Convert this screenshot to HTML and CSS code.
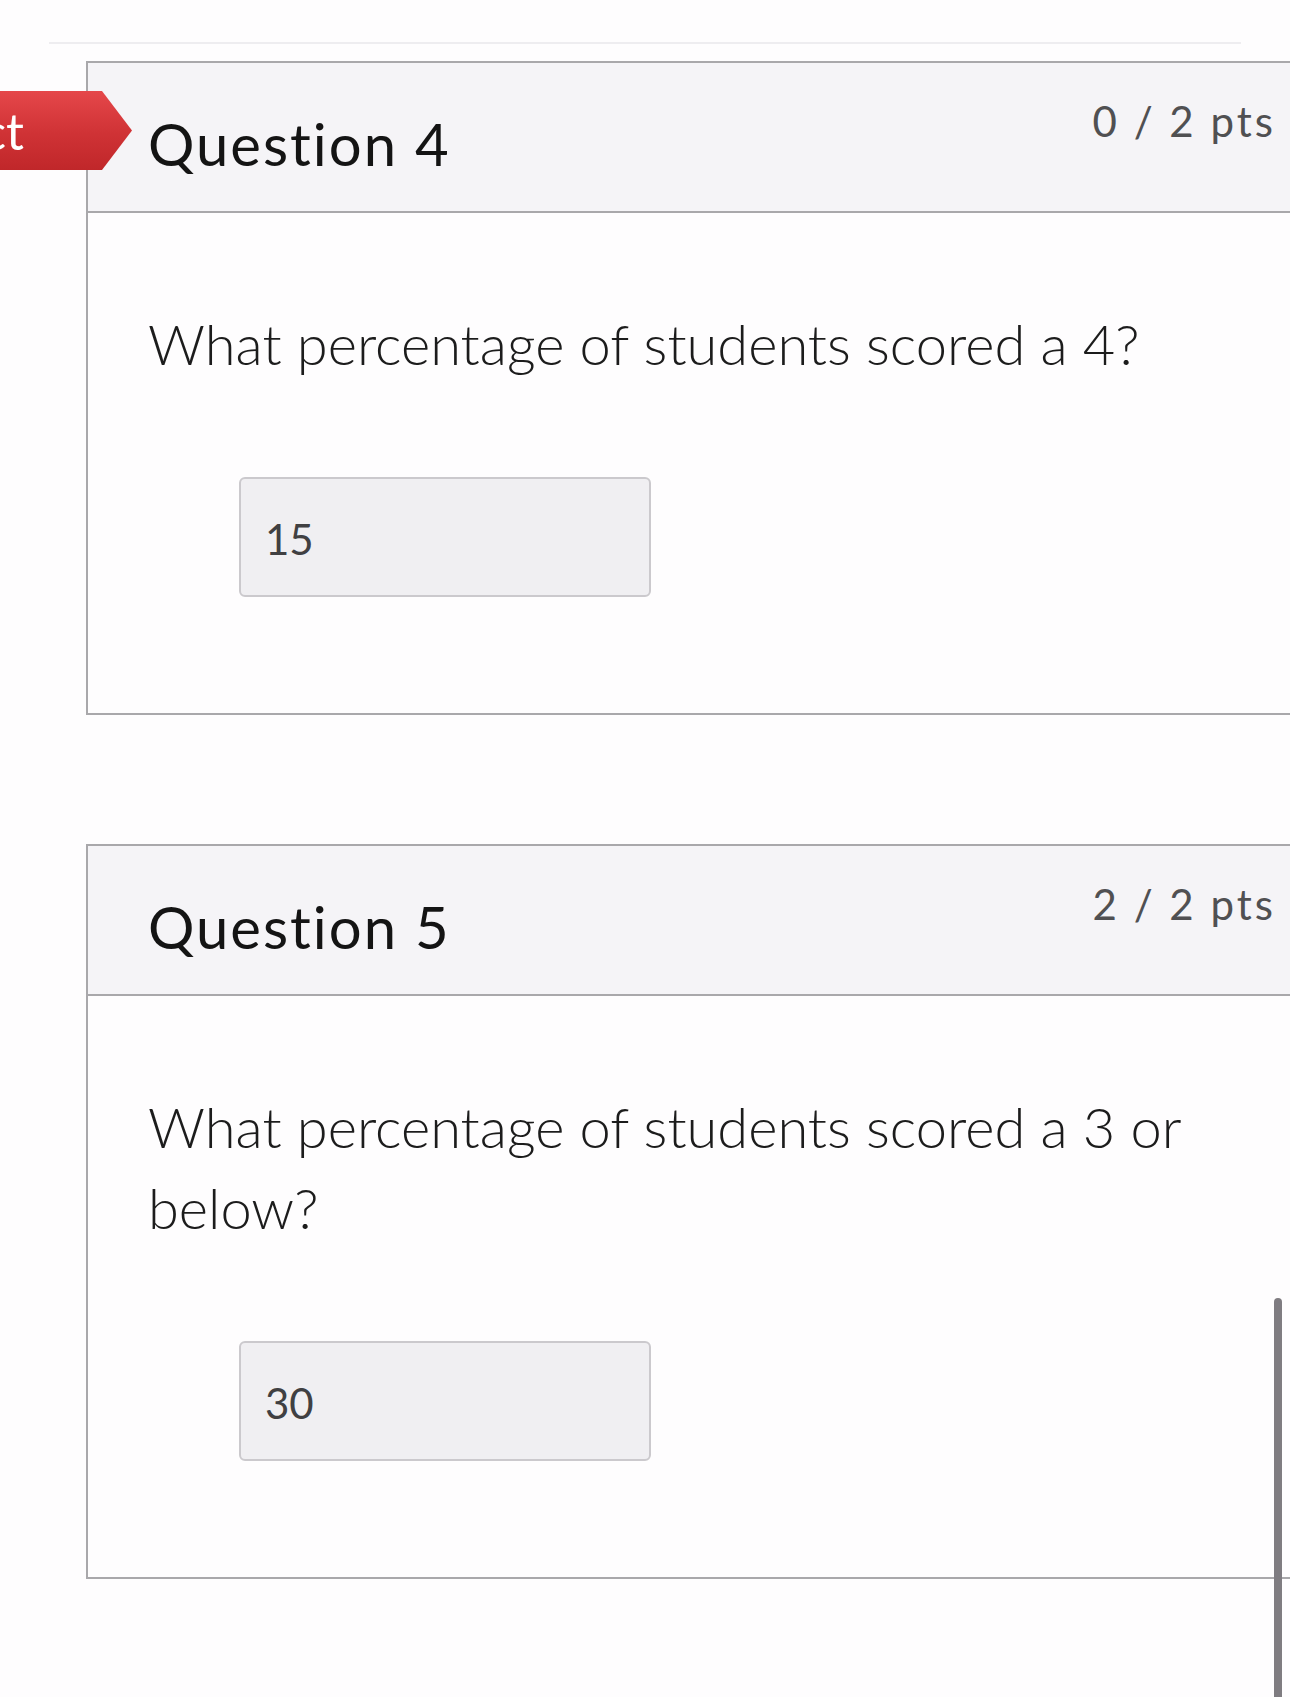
FILE: index.html
```html
<!DOCTYPE html>
<html lang="en">
<head>
<meta charset="utf-8">
<title>Quiz Results</title>
<link rel="stylesheet" href="styles.css">
</head>
<body>
<div class="page">
  <div class="divider"></div>

  <div class="card card-first">
    <div class="card-header">
      <h2 class="q-title">Question 4</h2>
      <span class="q-pts">0 / 2 pts</span>
    </div>
    <div class="card-body">
      <p class="q-text">What percentage of students scored a 4?</p>
      <div class="answer">15</div>
    </div>
  </div>

  <div class="card card-second">
    <div class="card-header">
      <h2 class="q-title">Question 5</h2>
      <span class="q-pts">2 / 2 pts</span>
    </div>
    <div class="card-body">
      <p class="q-text">What percentage of students scored a 3 or<br>below?</p>
      <div class="answer">30</div>
    </div>
  </div>
</div>

<div class="tag"><span class="tag-text">Incorrect</span></div>
<div class="scrollbar"></div>
</body>
</html>
```

FILE: styles.css
```css
html, body {
  margin: 0;
  padding: 0;
}
body {
  background: #fefdfe;
  font-family: Lato, "Open Sans", "Liberation Sans", sans-serif;
  color: #1f1f1f;
  overflow: hidden;
  position: relative;
  min-height: 1697px;
}
.page {
  padding-top: 42px;
}
.divider {
  margin-left: 49px;
  width: 1192px;
  height: 2px;
  background: #eeedf0;
}
.card {
  margin-left: 86px;
  width: 1220px;
  border: 2px solid #a9a8ab;
  background: #fefdfe;
}
.card-first {
  margin-top: 17px;
}
.card-second {
  margin-top: 129px;
}
.card-header {
  box-sizing: border-box;
  height: 150px;
  background: #f5f4f7;
  border-bottom: 2px solid #a9a8ab;
  display: flex;
  justify-content: space-between;
  align-items: flex-start;
  padding: 0 32px 0 60px;
}
.q-title {
  margin: 46px 0 0 0;
  font-size: 58px;
  line-height: 1.2;
  font-weight: 400;
  color: #141414;
  letter-spacing: 2px;
}
.q-pts {
  margin-top: 33px;
  font-size: 42px;
  line-height: 1.2;
  color: #505052;
  letter-spacing: 3px;
}
.card-body {
  padding: 90px 0 116px 60px;
}
.q-text {
  margin: 0;
  font-size: 56px;
  font-weight: 300;
  line-height: 81px;
  color: #1c1c1c;
}
.answer {
  box-sizing: border-box;
  margin: 93px 0 0 91px;
  width: 412px;
  height: 120px;
  background: #f0eff2;
  border: 2px solid #cbc9cd;
  border-radius: 6px;
  display: flex;
  align-items: center;
  padding: 4px 0 0 24px;
  font-size: 42px;
  line-height: 1.2;
  color: #404042;
}
.tag {
  position: absolute;
  left: -300px;
  top: 91px;
  width: 432px;
  height: 79px;
  background: linear-gradient(#e5474a, #cf3235 55%, #c0272a);
  clip-path: polygon(0 0, 402px 0, 432px 50%, 402px 100%, 0 100%);
  display: flex;
  justify-content: flex-end;
  align-items: center;
  padding-right: 108px;
  box-sizing: border-box;
}
.tag-text {
  color: #fff;
  font-size: 50px;
  line-height: 1;
}
.scrollbar {
  position: absolute;
  left: 1274px;
  top: 1298px;
  width: 8px;
  height: 420px;
  border-radius: 4px;
  background: #7f7c81;
}
```
